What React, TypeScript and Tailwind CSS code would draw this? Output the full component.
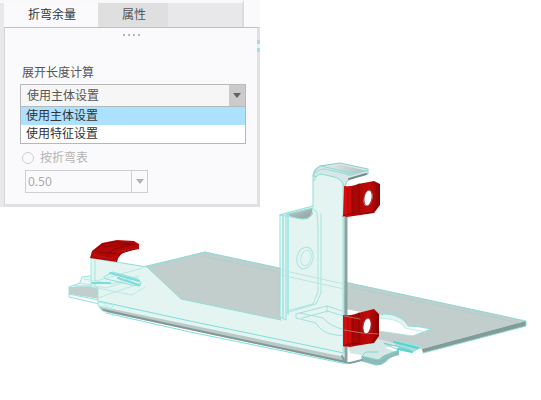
import { useState } from "react";

const modes = ["使用主体设置", "使用特征设置"];

function SheetMetalModel() {
  return (
    <svg
      viewBox="0 0 541 400"
      className="col-start-1 row-start-1 h-auto w-full"
      role="img"
      aria-label="钣金件模型"
      strokeLinejoin="round"
      strokeLinecap="round"
      fill="none"
    >
      <defs>
        <linearGradient id="lip" x1="0" y1="0" x2="1" y2="0">
          <stop offset="0" stopColor="#e6f3f1" />
          <stop offset="1" stopColor="#7f9794" />
        </linearGradient>
        <linearGradient id="cup" x1="0" y1="0" x2="1" y2="1">
          <stop offset="0" stopColor="#c2cecd" />
          <stop offset="1" stopColor="#929d9e" />
        </linearGradient>
        <linearGradient id="redTab" x1="0" y1="0" x2="1" y2="0">
          <stop offset="0" stopColor="#dc0a0a" />
          <stop offset="0.35" stopColor="#a80606" />
          <stop offset="0.7" stopColor="#c40808" />
          <stop offset="1" stopColor="#8c0404" />
        </linearGradient>
      </defs>

      {/* Base plate with cut-out */}
      <path
        fillRule="evenodd"
        d="M143 267L205 252L526 321L422 349L395 346L375 341L345 345L180 302ZM345 309L378 315Q385 313 393 315C402 318 406 322 408 326Q418 326 431 329L413 336L378 331L345 322Z"
        fill="#c2cecc"
      />
      <path d="M422 349L526 321V326L423 353Z" fill="#869a97" />
      <path d="M378 315Q385 313 393 315C402 318 406 322 408 326L405 328C400 320 392 319 379 318Z" fill="#e2f5f3" />
      <path d="M143 267L205 252L526 321V326L423 353" stroke="#8dd9d6" />
      <path d="M202 256L520 323" stroke="#b0cfcc" />
      <path d="M524 323L423 350" stroke="#75a19e" />
      <path d="M378 315Q385 313 393 315C402 318 406 322 408 326Q418 326 431 329L413 336" stroke="#8ee0dd" />
      <path d="M413 336L378 331" stroke="#b5dedb" />
      <path d="M379 318C392 319 400 320 405 328L425 332" stroke="#c0ebe8" />

      {/* Notches on the right of the front edge */}
      <path d="M348 347L378 339L397 344L385 348L400 353L391 358Q384 366 375 364L362 361L366 356L350 353Z" fill="#d3e7e4" />
      <path d="M362 356L378 360Q384 354 399 350V355Q389 357 386 361Q383 365 377 365L362 361Z" fill="#8cbab6" />
      <path d="M396 345L408 341L422 347L414 352L400 350Z" fill="#a8dcd9" />
      <path d="M385 344L399 350Q389 353 384 358Q380 361 374 359L362 356L366 352L378 352" stroke="#7fd5d2" />
      <path d="M362 356V361L376 365Q382 365 386 361M384 343L410 350" stroke="#83c9c6" />
      <path d="M394 342L418 348M398 349L412 352" stroke="#4fd6d6" strokeWidth="2" />

      {/* Small tab on the left */}
      <path d="M78 283L83 277L92 274L100 287L69 287Z" fill="#eaf7f5" />
      <path d="M69 287L99 286V299L69 294Z" fill="#c0cecc" />
      <path d="M69 294L99 299V304L69 297Z" fill="#f0faf8" />
      <path d="M69 287L80 283L82 277L90 276M69 287V297L99 304M69 294L99 300M75 286H98" stroke="#9ae3e1" />

      {/* Front wall, closed along the bottom bend */}
      <path
        d="M91 258L147 267L181 299L281 320V217L313 208V174L322 166H344V362L106 311Q99 309 98 301V287H91Z"
        fill="#e4f5f1"
      />
      <path d="M91 258L147 267L181 299L281 320" stroke="#93dbd8" />
      <path d="M103 307L345 357V363L106 312Q100 311 99 306Z" fill="#b9c9c7" />
      <path d="M103 310L190 329L346 362" stroke="#839896" strokeWidth="2" />
      <path d="M98 301L190 321L344 353M106 313L190 332L347 364" stroke="#7ddfdc" />
      <path d="M91 258V286M95 259V288M98 288V304Q100 311 106 312" stroke="#a3e6e3" />
      <path d="M80 283L106 288L131 280M84 279L112 284L139 276M92 287L132 295L145 287M98 298L141 283M143 268L96 281" stroke="#b8e9e7" />
      <path d="M104 277L113 272L138 279Q142 282 140 286L132 285L106 279Z" stroke="#8fdfdd" />
      <path d="M110 273L139 281M118 278L139 285M92 283H110" stroke="#7adcdb" strokeWidth="2" />
      <path d="M99 302L114 305L110 309L99 306M105 305L111 310" stroke="#a9e9e6" />
      <path d="M147 267L205 252" stroke="#9ddbd8" />

      {/* Rear neighbour of the tall flange */}
      <path d="M281 217Q281 213 288 211L313 206V319L285 320L280 317Z" fill="#e4f5f1" />
      <path d="M286 214L312 208Q313 216 307 219Q296 220 286 214Z" fill="url(#cup)" />
      <path d="M280 215L313 206M280 215V317L286 320V215L313 208Q315 218 302 219L280 215" stroke="#8fdfdc" />
      <path d="M283 216V317M288 216V314" stroke="#a9e9e6" strokeWidth="2" />

      {/* Tall flange with its curled upper lip */}
      <path d="M320 166L340 163L368 169V174L350 179Q345 182 345 189Q343 181 337 179L313 176Q315 169 320 166Z" fill="#d6e7e5" stroke="#8fcdc9" />
      <path d="M326 168L341 165L367 171L350 176Z" fill="url(#lip)" opacity="0.5" />
      <path d="M344 352V188Q343 179 334 177L321 174Q316 175 313 181V345Z" fill="#e4f5f1" />
      <path d="M344 352V188Q343 179 334 177L321 174Q316 175 314 181" stroke="#8bdbd8" />
      <path d="M313 207V176Q313 168 321 166L351 173L368 170M316 173Q318 169 325 169L350 175" stroke="#94dbd8" />
      <path d="M349 179L366 174" stroke="#708e8b" strokeWidth="2" />
      <path d="M346 188V360" stroke="#8aa3a1" strokeWidth="3" />
      <path d="M343 183V357" stroke="#a2e2df" />
      <path d="M342 356Q344 363 350 363L362 360" stroke="#84a09d" strokeWidth="2" />

      {/* Edges seen through the flange */}
      <path d="M313 209L317 212L318 229V292L313 304L287 311M321 214V293L316 304L289 312" stroke="#a5e4e1" />
      <path d="M281 270L344 284M281 275L344 289" stroke="#b9e5e2" />
      <ellipse cx="305" cy="258" rx="8" ry="11" stroke="#a9e4e1" transform="rotate(14 305 258)" />
      <ellipse cx="306" cy="258" rx="5" ry="8" stroke="#b2e8e4" transform="rotate(14 306 258)" />
      <path d="M296 314L327 306L342 311M296 314V318L316 323Q321 333 336 335L345 336M300 313L323 318Q329 326 345 330M327 306V312M302 318L328 311L343 316" stroke="#a5dfdc" />

      {/* Red tab, upper right */}
      <path fillRule="evenodd" d="M344 186Q352 187 358 184L374 181L380 184V205L374 213L347 217L343 216ZM369 191C364 192 361 206 367 206C373 205 375 190 369 191Z" fill="url(#redTab)" />
      <path d="M353 186V215M359 184V213M374 182L378 186V204L373 212M343 216Q352 212 360 214L374 212" stroke="#860404" />
      <path d="M346 188V215M350 188V214" stroke="#d61010" />
      <ellipse cx="368" cy="198" rx="4" ry="8" transform="rotate(9 368 198)" fill="#fff" stroke="#8f3434" />

      {/* Red tab, lower right */}
      <path d="M343 315Q352 316 358 313L374 309L379 314V336L374 343Q360 345 350 347L343 346Z" fill="url(#redTab)" />
      <path d="M353 315V345M359 313V343M374 311L377 315V335L371 343M344 346Q352 342 360 344" stroke="#860404" />
      <path d="M346 317V344M350 316V343" stroke="#d61010" />
      <path d="M344 316L360 319M344 330L362 333L378 334" stroke="#b26a64" />
      <ellipse cx="367" cy="326" rx="4" ry="8" transform="rotate(9 367 326)" fill="#fff" stroke="#8f3434" />

      {/* Red tab, left */}
      <path d="M90 258L92 251L102 243L117 240L134 241L139 244V249L124 252Q118 256 117 262Z" fill="#b40707" />
      <path d="M95 250L103 244L116 242L134 244L114 249L105 258M98 252L119 254L137 248M102 247L130 244" stroke="#8a0404" />
      <path d="M93 255L113 259L120 251L137 248" stroke="#c41414" />
    </svg>
  );
}

function Panel() {
  const [mode, setMode] = useState(modes[0]);
  return (
    <section className="z-10 col-start-1 row-start-1 w-65 self-start bg-[#fafafc] text-xs leading-4 text-[#555]">
      <div role="tablist" className="mr-4 flex h-[27px] items-stretch border-t-3 border-r-2 border-t-[#f8f8fa] border-r-[#dcdcde] bg-[#e8e8ea] pl-1">
        <button role="tab" aria-selected="true" className="w-[94px] bg-[#fafafc] pl-0.5 text-[#333]">
          折弯余量
        </button>
        <button role="tab" aria-selected="false" className="w-[70px] bg-[#dfdfe0] pl-0.5">
          属性
        </button>
      </div>
      <div className="bg-[#e8e8ea] pl-1">
        <div role="tabpanel" className="relative border-t border-r-3 border-b-3 border-l border-t-[#c0c0c2] border-r-[#e1e1e3] border-b-[#e1e1e3] border-l-[#d5d5d7] bg-[#fafafc] pr-4 pb-[11px] pl-[17px]">
          <div className="flex justify-center gap-[3px] pt-1.5" aria-hidden="true">
            {[0, 1, 2, 3].map((n) => (
              <span key={n} className="size-0.5 bg-[#b7b7b9]" />
            ))}
          </div>
          <span className="absolute top-3 -right-[3px] flex flex-col gap-1 bg-[#dff3f9]" aria-hidden="true">
            <span className="h-1 w-[3px] bg-[#b9d3dc]" />
            <span className="h-1 w-[3px] bg-[#a9dcea]" />
          </span>
          <label htmlFor="mode" className="mt-[29px] block">
            展开长度计算
          </label>
          <div className="relative mt-[3px] -ml-0.5 w-[226px]">
            <select
              id="mode"
              value={mode}
              onChange={(e) => setMode(e.target.value)}
              className="block h-[23px] w-full appearance-none border border-[#b9b9bb] bg-[#f6f6f6] pl-1.5 text-[#555] outline-none"
            >
              {modes.map((m) => (
                <option key={m}>{m}</option>
              ))}
            </select>
            <span className="pointer-events-none absolute inset-y-px right-px flex w-4 items-center justify-center bg-[#cbcbcc]">
              <svg viewBox="0 0 8 5" className="h-[5px] w-2" aria-hidden="true">
                <path d="M0 0H8L4 5Z" fill="#626264" />
              </svg>
            </span>
            <ul role="listbox" aria-label="展开长度计算" className="absolute inset-x-0 top-[22px] border border-[#b0babe] bg-white text-[#333]">
              {modes.map((m) => (
                <li key={m} role="presentation">
                  <button
                    role="option"
                    aria-selected={m === mode}
                    onClick={() => setMode(m)}
                    className="block h-[18px] w-full pl-[5px] text-left aria-selected:bg-[#ace1ff]"
                  >
                    {m}
                  </button>
                </li>
              ))}
            </ul>
          </div>
          <label className="mt-[43px] flex items-center gap-1.5 text-[#b3b3b5]">
            <input type="radio" name="source" disabled className="size-3 appearance-none rounded-full border border-[#d0d0d2] bg-[#fafafc]" />
            按折弯表
          </label>
          <div className="relative mt-1 ml-[3px] w-[123px]">
            <select disabled aria-label="折弯系数" className="block h-[23px] w-full appearance-none border border-[#cfcfd1] bg-[#fafafc] pl-0.5 text-[#aaaaac] opacity-100">
              <option>0.50</option>
            </select>
            <span className="pointer-events-none absolute inset-y-px right-px flex w-4 items-center justify-center border-l border-[#cfcfd1]">
              <svg viewBox="0 0 8 5" className="h-[5px] w-2" aria-hidden="true">
                <path d="M0 0H8L4 5Z" fill="#b0b0b2" />
              </svg>
            </span>
          </div>
        </div>
      </div>
    </section>
  );
}

export default function App() {
  return (
    <main className="grid min-h-screen grid-cols-1 bg-white font-['Noto_Sans','Noto_Sans_CJK_SC',sans-serif]">
      <SheetMetalModel />
      <Panel />
    </main>
  );
}
